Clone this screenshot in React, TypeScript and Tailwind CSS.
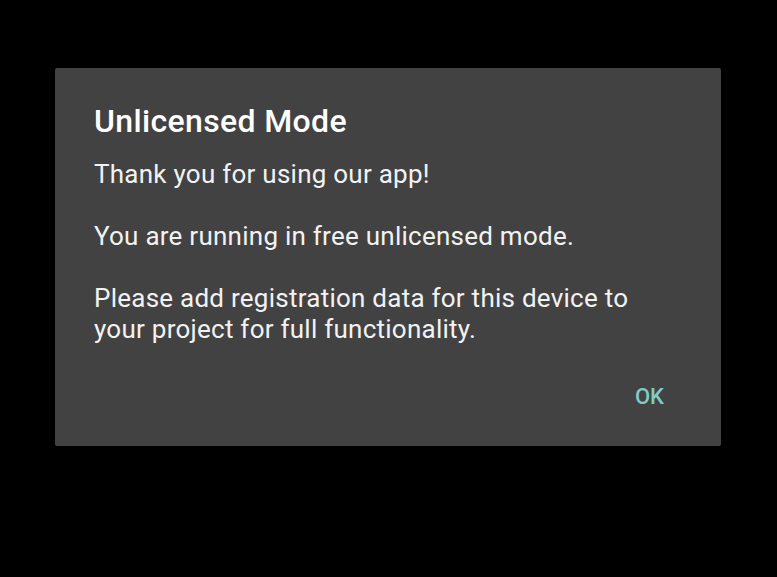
export default function App() {
  return (
    <div className="w-[777px] h-[577px] bg-black pt-[68px] pl-[55px] font-['Roboto',sans-serif]">
      <div className="w-[666px] h-[378px] bg-[#424242] rounded-[2px] flex flex-col pl-[39px] pr-[57px]">
        <h1 className="mt-[34px] text-[32px] leading-[38px] tracking-[0.35px] font-medium text-white">Unlicensed Mode</h1>
        <div className="mt-[19px] text-[26px] leading-[31px] tracking-[0.25px] text-[#f2f2f2] whitespace-pre-line">
          {"Thank you for using our app!\n\nYou are running in free unlicensed mode.\n\nPlease add registration data for this device to your project for full functionality."}
        </div>
        <div className="mt-auto mb-[35px] flex justify-end">
          <button className="text-[22px] font-medium text-[#80cbc4] leading-[28px]">OK</button>
        </div>
      </div>
    </div>
  );
}
